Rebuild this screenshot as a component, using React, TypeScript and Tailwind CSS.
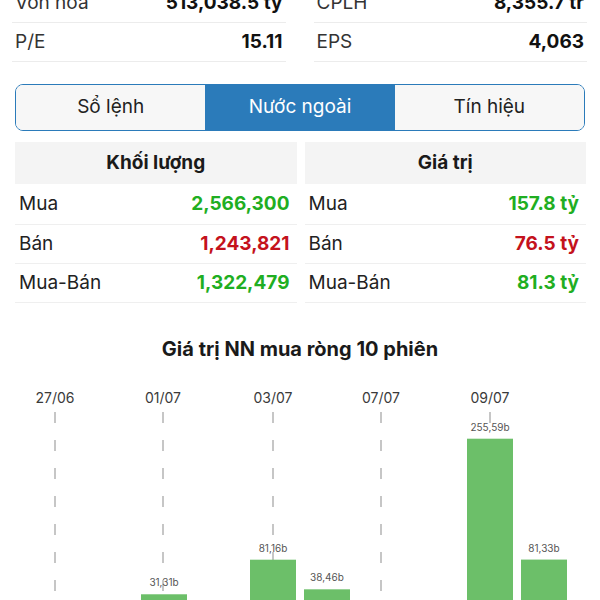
import React from "react";

const FONT = { fontFamily: "Inter, 'Noto Sans', 'Liberation Sans', sans-serif" };

function StatRow({ label, value }: { label: string; value: string }) {
  return (
    <div className="flex h-[39px] items-center justify-between border-b border-[#ececec] px-[3px]">
      <span className="text-[19px] text-[#333]">{label}</span>
      <span className="text-[19px] font-bold text-[#111]">{value}</span>
    </div>
  );
}

function TRow({ label, value, color, h }: { label: string; value: string; color: string; h: string }) {
  return (
    <div className={`flex ${h} items-center justify-between border-b border-[#efefef] pl-[4px] pr-[7px]`}>
      <span className="text-[19px] text-[#222]">{label}</span>
      <span className={`text-[19px] font-bold ${color}`}>{value}</span>
    </div>
  );
}

const GREEN = "text-[#1fae22]";
const RED = "text-[#c4121c]";

const bars: { x: number; v: number | null; label: string }[] = [
  { x: 55, v: null, label: "" },
  { x: 109, v: null, label: "" },
  { x: 164, v: 31.31, label: "31,31b" },
  { x: 218, v: null, label: "" },
  { x: 273, v: 81.16, label: "81,16b" },
  { x: 327, v: 38.46, label: "38,46b" },
  { x: 381, v: null, label: "" },
  { x: 436, v: null, label: "" },
  { x: 490, v: 255.59, label: "255,59b" },
  { x: 544, v: 81.33, label: "81,33b" },
];

const dates = [
  { x: 55, t: "27/06" },
  { x: 163, t: "01/07" },
  { x: 273, t: "03/07" },
  { x: 381, t: "07/07" },
  { x: 490, t: "09/07" },
];

function Chart() {
  const base = 236;
  const k = 0.6937;
  return (
    <svg width="600" height="240" viewBox="0 0 600 240" className="block" style={FONT}>
      {dates.map((d) => (
        <g key={d.t}>
          <text x={d.x} y={23} textAnchor="middle" fontSize="14" fill="#3a3a3a">
            {d.t}
          </text>
          <line x1={d.x} y1={32} x2={d.x} y2={240} stroke="#b4b4b4" strokeWidth="1.5" strokeDasharray="11 17" />
        </g>
      ))}
      {bars.map((b, i) =>
        b.v === null ? null : (
          <g key={i}>
            <text x={b.x} y={base - b.v * k - 8} textAnchor="middle" fontSize="10" fill="#555">
              {b.label}
            </text>
            <rect x={b.x - 23} y={base - b.v * k} width="46" height={b.v * k + 10} fill="#6cbf69" />
          </g>
        )
      )}
    </svg>
  );
}

export default function App() {
  return (
    <div className="h-[600px] w-[600px] overflow-hidden bg-white" style={FONT}>
      <div className="-mt-[16px] flex gap-[28px] pl-[12px] pr-[13px]">
        <div className="flex-1">
          <StatRow label="Vốn hóa" value="513,038.5 tỷ" />
          <StatRow label="P/E" value="15.11" />
        </div>
        <div className="flex-1">
          <StatRow label="CPLH" value="8,355.7 tr" />
          <StatRow label="EPS" value="4,063" />
        </div>
      </div>

      <div className="mx-[15px] mt-[22px] flex h-[47px] overflow-hidden rounded-[8px] border border-[#2b7bba]">
        <div className="flex flex-1 items-center justify-center bg-[#f7f7f7] text-[19px] text-[#222]">Sổ lệnh</div>
        <div className="flex flex-1 items-center justify-center bg-[#2b7bba] text-[19px] text-white">Nước ngoài</div>
        <div className="flex flex-1 items-center justify-center bg-[#f7f7f7] text-[19px] text-[#222]">Tín hiệu</div>
      </div>

      <div className="mt-[11px] flex gap-[8px] pl-[15px] pr-[14px]">
        <div className="flex-1">
          <div className="flex h-[42px] items-center justify-center bg-[#f4f4f4] text-[19px] font-bold text-[#1a1a1a]">
            Khối lượng
          </div>
          <TRow h="h-[41px]" label="Mua" value="2,566,300" color={GREEN} />
          <TRow h="h-[39px]" label="Bán" value="1,243,821" color={RED} />
          <TRow h="h-[39px]" label="Mua-Bán" value="1,322,479" color={GREEN} />
        </div>
        <div className="flex-1">
          <div className="flex h-[42px] items-center justify-center bg-[#f4f4f4] text-[19px] font-bold text-[#1a1a1a]">
            Giá trị
          </div>
          <TRow h="h-[41px]" label="Mua" value="157.8 tỷ" color={GREEN} />
          <TRow h="h-[39px]" label="Bán" value="76.5 tỷ" color={RED} />
          <TRow h="h-[39px]" label="Mua-Bán" value="81.3 tỷ" color={GREEN} />
        </div>
      </div>

      <div className="mt-[34px] text-center text-[20px] font-bold leading-[24px] text-[#1a1a1a]">
        Giá trị NN mua ròng 10 phiên
      </div>
      <div className="mt-[19px]">
        <Chart />
      </div>
    </div>
  );
}
